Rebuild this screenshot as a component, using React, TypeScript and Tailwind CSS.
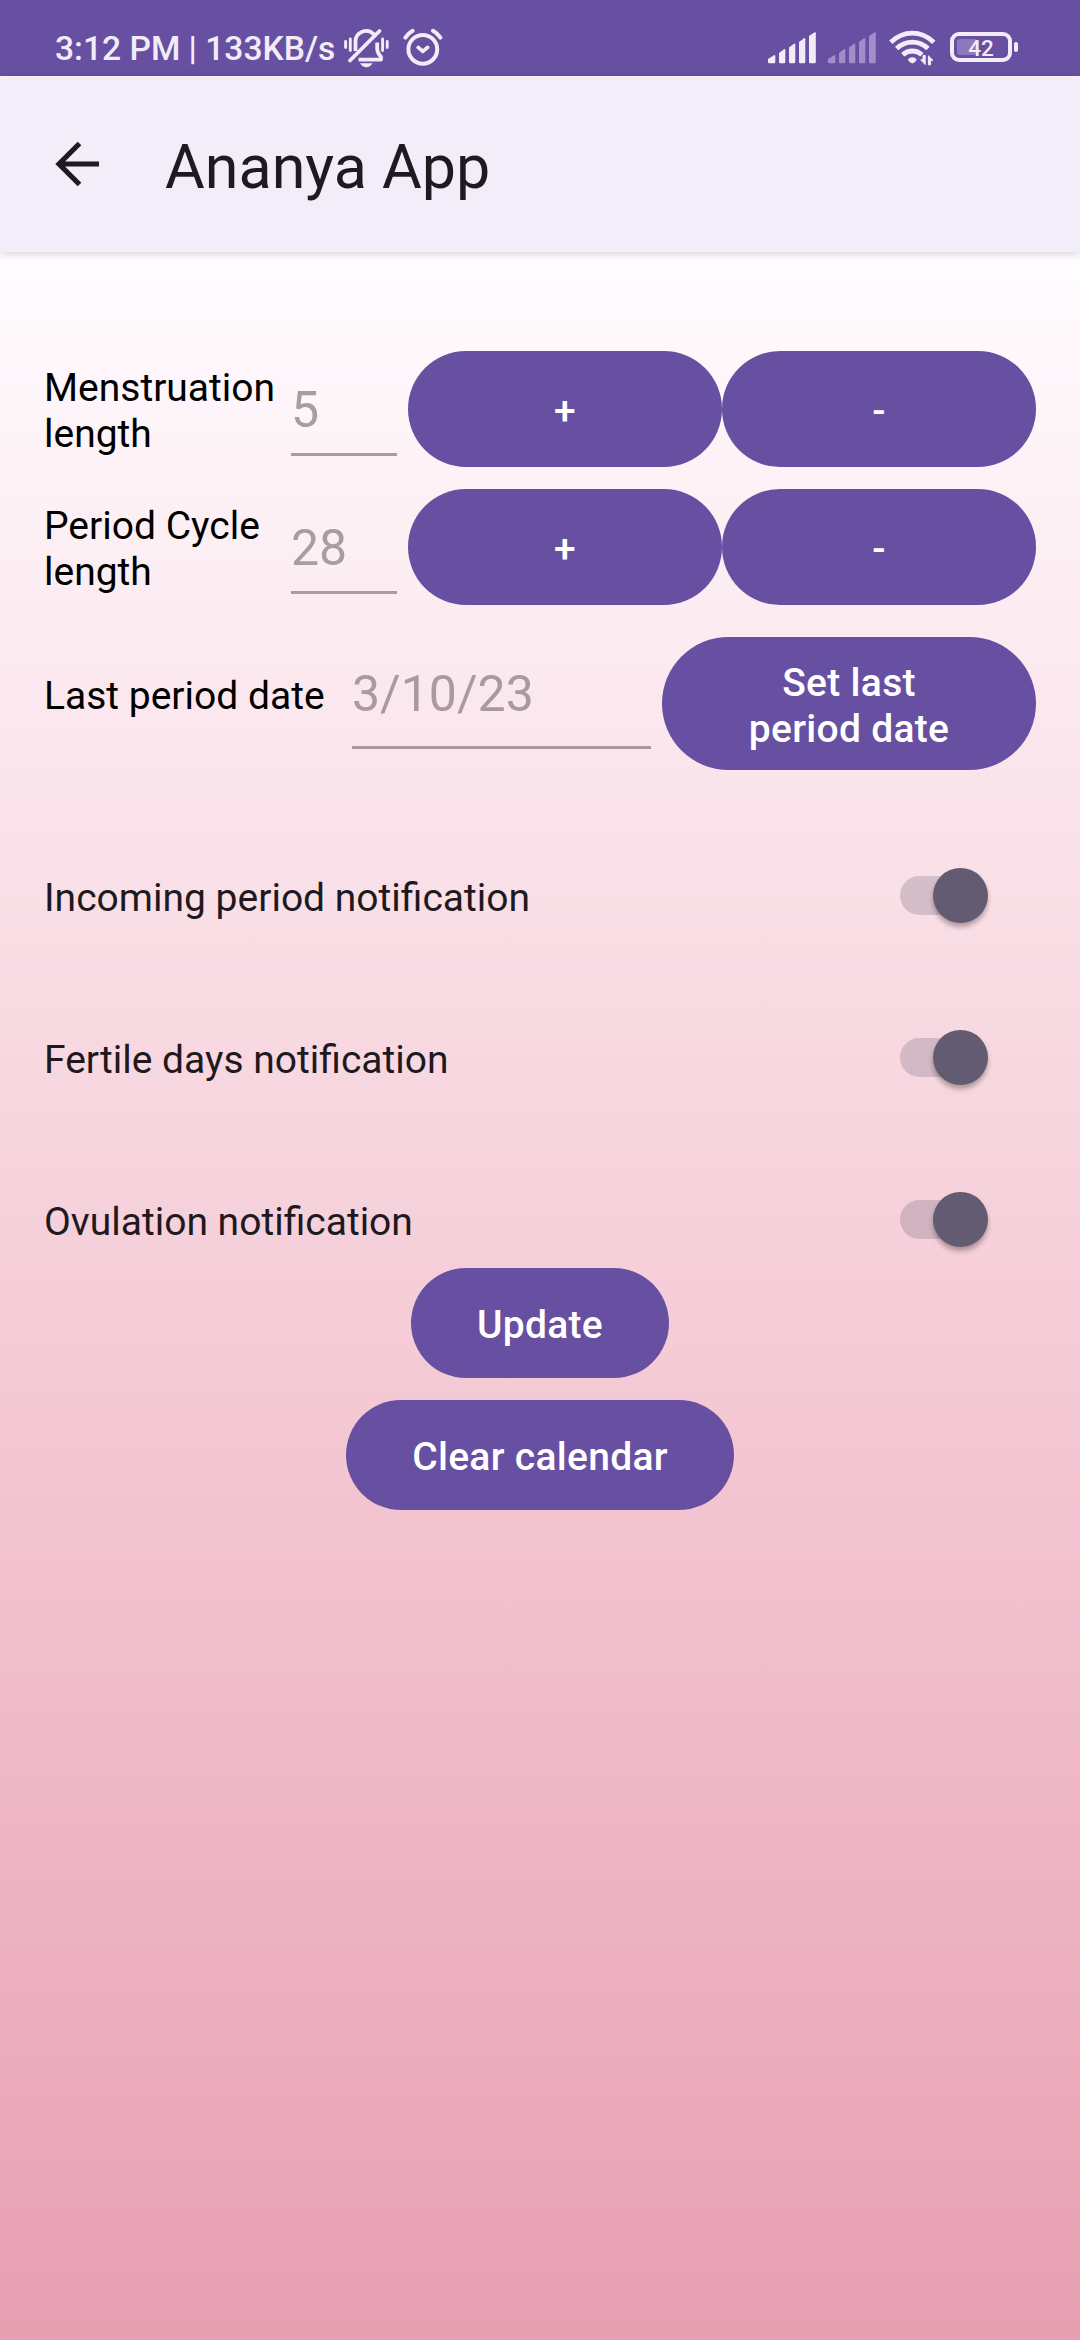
import { useState } from "react";

const notificationItems = [
  { key: "period", label: "Incoming period notification" },
  { key: "fertile", label: "Fertile days notification" },
  { key: "ovulation", label: "Ovulation notification" },
];

function SilentIcon() {
  return (
    <svg width="46" height="42" viewBox="0 0 46 42" fill="none" stroke="currentColor" strokeWidth="3.8">
      <path d="M11.5 23V14A10.6 10.6 0 0 1 30 6.6" />
      <path d="M33.2 14.5V21Q33.4 25 37 29V31.6H14.5" strokeLinejoin="round" />
      <path d="M6 32.5L35.5 3" strokeLinecap="round" />
      <path d="M1.6 13.5V19.5M6.3 11V22.5M38.6 11V22.5M43.2 13.5V19.5" strokeWidth="2.9" strokeLinecap="round" />
      <path d="M16 35.2H28.6Q26 39.2 22.3 39.2Q18.6 39.2 16 35.2Z" fill="currentColor" stroke="none" />
    </svg>
  );
}

function AlarmIcon() {
  return (
    <svg width="40" height="40" viewBox="0 0 40 40" fill="none" stroke="currentColor" strokeWidth="4" strokeLinecap="round">
      <circle cx="19.8" cy="21.3" r="14.4" />
      <path d="M2.4 9.6Q5 5.4 9.6 2.8M30 2.8Q34.6 5.4 37.4 9.6" />
      <path d="M15.2 19.4L19.8 23.4L24.6 19.4" strokeWidth="3.8" strokeLinejoin="round" />
    </svg>
  );
}

function SignalIcon({ className }: { className?: string }) {
  return (
    <svg width="48" height="32" viewBox="0 0 48 32" fill="currentColor" className={className}>
      <path d="M0 27L6 23.2Q7.3 22.8 7.3 24V30Q7.3 31.2 6 31.2H1.3Q0 31.2 0 30Z" />
      <path d="M11 21L16 17.2Q17.3 16.7 17.3 18V30Q17.3 31.2 16 31.2H12.2Q11 31.2 11 30Z" />
      <path d="M21 15.5L26 11.7Q27.3 11.2 27.3 12.5V30Q27.3 31.2 26 31.2H22.2Q21 31.2 21 30Z" />
      <path d="M31 10L36 6.2Q37.3 5.7 37.3 7V30Q37.3 31.2 36 31.2H32.2Q31 31.2 31 30Z" />
      <path d="M41 4L46.6 0.3Q47.8 0 47.8 1.2V30Q47.8 31.2 46.5 31.2H42.2Q41 31.2 41 30Z" />
    </svg>
  );
}

function WifiIcon() {
  return (
    <svg width="48" height="36" viewBox="0 0 48 36" fill="none" stroke="currentColor" strokeWidth="4.8">
      <path d="M1.8 12.2Q11.5 3.2 23.3 3.2Q35.1 3.2 44.8 12.2" />
      <path d="M7.6 18.6Q14.5 12.2 23.3 12.2Q32.1 12.2 39 18.6" />
      <path d="M13.7 24.8Q18 21 23.3 21Q28.6 21 32.9 24.8" />
      <path d="M18.8 29.4Q20.8 27.2 23.3 27.2Q25.8 27.2 27.8 29.4Q26.6 32.4 23.3 33.6Q20 32.4 18.8 29.4Z" fill="currentColor" stroke="none" />
      <path d="M36.2 25.4V34.6L31.6 29.8H34V25.4ZM39.4 34.8V25.8L44 30.4H41.6V34.8Z" fill="currentColor" stroke="currentColor" strokeWidth="1" />
    </svg>
  );
}

function Battery() {
  return (
    <div className="flex items-center gap-0.5">
      <div className="relative flex h-[30px] w-[62px] items-center justify-center rounded-[9px] border-4 border-[#f2ecf9]">
        <div className="absolute left-[3px] top-[3px] h-4 w-5 rounded-[3px] bg-[#8d78bd]" />
        <span className="relative mt-0.5 text-[22.5px] font-medium leading-none">42</span>
      </div>
      <div className="h-[10px] w-1 rounded-full bg-[#f2ecf9]" />
    </div>
  );
}

function StatusBar() {
  return (
    <div className="flex h-[76px] items-start bg-[#674fa2] pl-[55px] pr-[62px] text-[#f2ecf9]">
      <span className="mt-[29px] w-[289px] whitespace-nowrap text-[33.6px] font-medium leading-10">3:12 PM | 133KB/s</span>
      <div className="mt-7 flex">
        <SilentIcon />
        <div className="ml-[13px]">
          <AlarmIcon />
        </div>
      </div>
      <div className="ml-auto mt-8 flex">
        <SignalIcon />
        <SignalIcon className="ml-3 text-[#a28dca]" />
        <div className="-mt-0.5 ml-[13px]">
          <WifiIcon />
        </div>
        <div className="ml-[13px]">
          <Battery />
        </div>
      </div>
    </div>
  );
}

function PillButton({ children, className, onClick }: { children: React.ReactNode; className: string; onClick?: () => void }) {
  return (
    <button
      onClick={onClick}
      className={`flex items-center justify-center rounded-full bg-[#674fa2] pt-[3px] text-center text-[39px] font-medium leading-[46px] tracking-[0.3px] text-white ${className}`}
    >
      {children}
    </button>
  );
}

function CounterRow({ label, initial }: { label: string; initial: number }) {
  const [value, setValue] = useState(initial);
  return (
    <div className="flex h-[116px]">
      <div className="w-[247px] pt-[14px] text-[39px] leading-[46px] text-black">{label}</div>
      <div className="mr-[11px] flex h-[105px] w-[106px] flex-col justify-end border-b-[3px] border-[#a99da4] pb-[14px] text-[50px] leading-[58px] text-[#a99da2]">
        {value}
      </div>
      <PillButton className="w-[314px]" onClick={() => setValue(value + 1)}>+</PillButton>
      <PillButton className="w-[314px]" onClick={() => setValue(value - 1)}>-</PillButton>
    </div>
  );
}

function SwitchRow({ label }: { label: string }) {
  return (
    <div className="flex h-[162px] items-center justify-between pr-12">
      <span className="mt-px text-[39px] leading-[46px] text-[#1f191f]">{label}</span>
      <div className="relative mb-[3px] mr-[5px] h-[39px] w-[83px] rounded-full bg-[#625b71]/25">
        <div className="absolute -right-[5px] -top-2 size-[55px] rounded-full bg-[#625b71] shadow-[0_4px_5px_rgba(0,0,0,0.3)]" />
      </div>
    </div>
  );
}

export default function App() {
  return (
    <div className="flex h-[2340px] w-[1080px] flex-col overflow-hidden font-['Roboto',sans-serif]">
      <StatusBar />

      {/* App bar */}
      <header className="relative flex h-44 items-center bg-[#f2edf8] pl-[55px] shadow-[0_2px_8px_rgba(0,0,0,0.16)]">
        <svg width="46" height="46" viewBox="0 0 46 46" fill="none" stroke="#1d1b20" strokeWidth="5.2">
          <path d="M44 23H5M24.5 2.5L4 23L24.5 43.5" />
        </svg>
        <h1 className="ml-16 mt-[6px] text-[61px] leading-[72px] text-[#1d1b20]">Ananya App</h1>
      </header>

      {/* Settings form */}
      <main className="flex flex-1 flex-col bg-linear-to-b from-[#fffcff] to-[#e79fb2] px-11 pt-[99px]">
        <div className="flex flex-col gap-[22px]">
          <CounterRow label="Menstruation length" initial={5} />
          <CounterRow label="Period Cycle length" initial={28} />
        </div>

        <div className="mt-8 flex h-[133px]">
          <div className="w-[308px] whitespace-nowrap pt-9 text-[39px] leading-[46px] text-black">Last period date</div>
          <div className="mr-[11px] h-28 w-[299px] border-b-[3px] border-[#a99aa2] pt-7 text-[50px] leading-[58px] text-[#a99aa2]">
            3/10/23
          </div>
          <PillButton className="w-[374px] px-16 pt-[5px]">Set last period date</PillButton>
        </div>

        <div className="mt-[46px] flex flex-col">
          {notificationItems.map((item) => (
            <SwitchRow key={item.key} label={item.label} />
          ))}
        </div>

        <div className="-mt-[34px] flex flex-col items-center gap-[22px]">
          <PillButton className="h-[110px] w-[258px]">Update</PillButton>
          <PillButton className="h-[110px] w-[388px]">Clear calendar</PillButton>
        </div>
      </main>
    </div>
  );
}
